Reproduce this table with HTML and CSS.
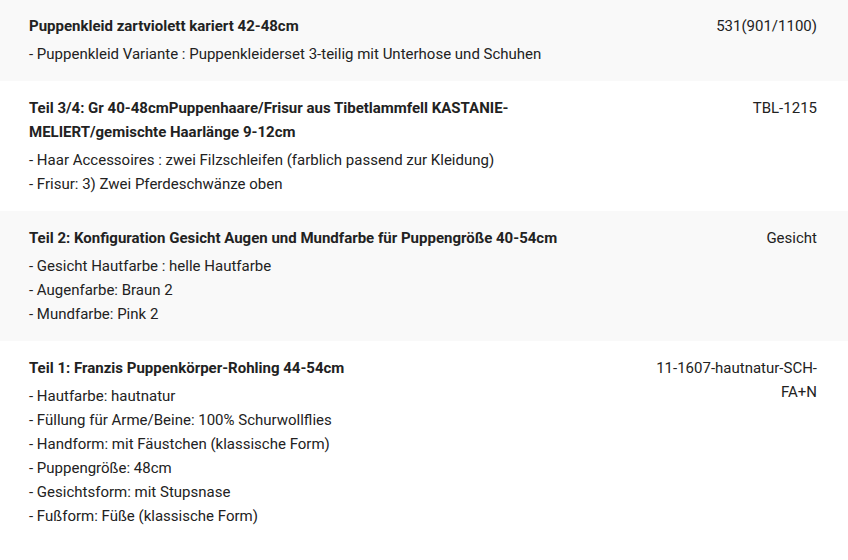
FILE: index.html
```
<!DOCTYPE html>
<html lang="de">
<head>
<meta charset="utf-8">
<title>Bestellpositionen</title>
<link rel="stylesheet" href="styles.css">
</head>
<body>
<div class="items">
  <div class="item item--alt">
    <div class="item__main">
      <div class="item__title">Puppenkleid zartviolett kariert 42-48cm</div>
      <div class="item__opt">- Puppenkleid Variante : Puppenkleiderset 3-teilig mit Unterhose und Schuhen</div>
    </div>
    <div class="item__sku">531(901/1100)</div>
  </div>
  <div class="item">
    <div class="item__main">
      <div class="item__title">Teil 3/4: Gr 40-48cmPuppenhaare/Frisur aus Tibetlammfell KASTANIE-MELIERT/gemischte Haarlänge 9-12cm</div>
      <div class="item__opt">- Haar Accessoires : zwei Filzschleifen (farblich passend zur Kleidung)</div>
      <div class="item__opt">- Frisur: 3) Zwei Pferdeschwänze oben</div>
    </div>
    <div class="item__sku">TBL-1215</div>
  </div>
  <div class="item item--alt">
    <div class="item__main">
      <div class="item__title">Teil 2: Konfiguration Gesicht Augen und Mundfarbe für Puppengröße 40-54cm</div>
      <div class="item__opt">- Gesicht Hautfarbe : helle Hautfarbe</div>
      <div class="item__opt">- Augenfarbe: Braun 2</div>
      <div class="item__opt">- Mundfarbe: Pink 2</div>
    </div>
    <div class="item__sku">Gesicht</div>
  </div>
  <div class="item">
    <div class="item__main">
      <div class="item__title">Teil 1: Franzis Puppenkörper-Rohling 44-54cm</div>
      <div class="item__opt">- Hautfarbe: hautnatur</div>
      <div class="item__opt">- Füllung für Arme/Beine: 100% Schurwollflies</div>
      <div class="item__opt">- Handform: mit Fäustchen (klassische Form)</div>
      <div class="item__opt">- Puppengröße: 48cm</div>
      <div class="item__opt">- Gesichtsform: mit Stupsnase</div>
      <div class="item__opt">- Fußform: Füße (klassische Form)</div>
    </div>
    <div class="item__sku">11-1607-hautnatur-SCH-FA+N</div>
  </div>
</div>
</body>
</html>
```
FILE: styles.css
```
html, body {
  margin: 0;
  padding: 0;
  background: #fff;
}
body {
  font-family: Roboto, "Liberation Sans", Arial, sans-serif;
  font-size: 15px;
  line-height: 24px;
  color: #222;
}
.items {
  margin-top: -1px;
}
.item {
  display: flex;
  gap: 24px;
  padding: 15px 31px 15px 29px;
}
.item--alt {
  background: #f9f9f9;
}
.item__main {
  flex: 1;
  min-width: 0;
}
.item__title {
  font-weight: 700;
  margin-bottom: 4px;
}
.item__sku {
  width: 172px;
  flex-shrink: 0;
  text-align: right;
}
```
